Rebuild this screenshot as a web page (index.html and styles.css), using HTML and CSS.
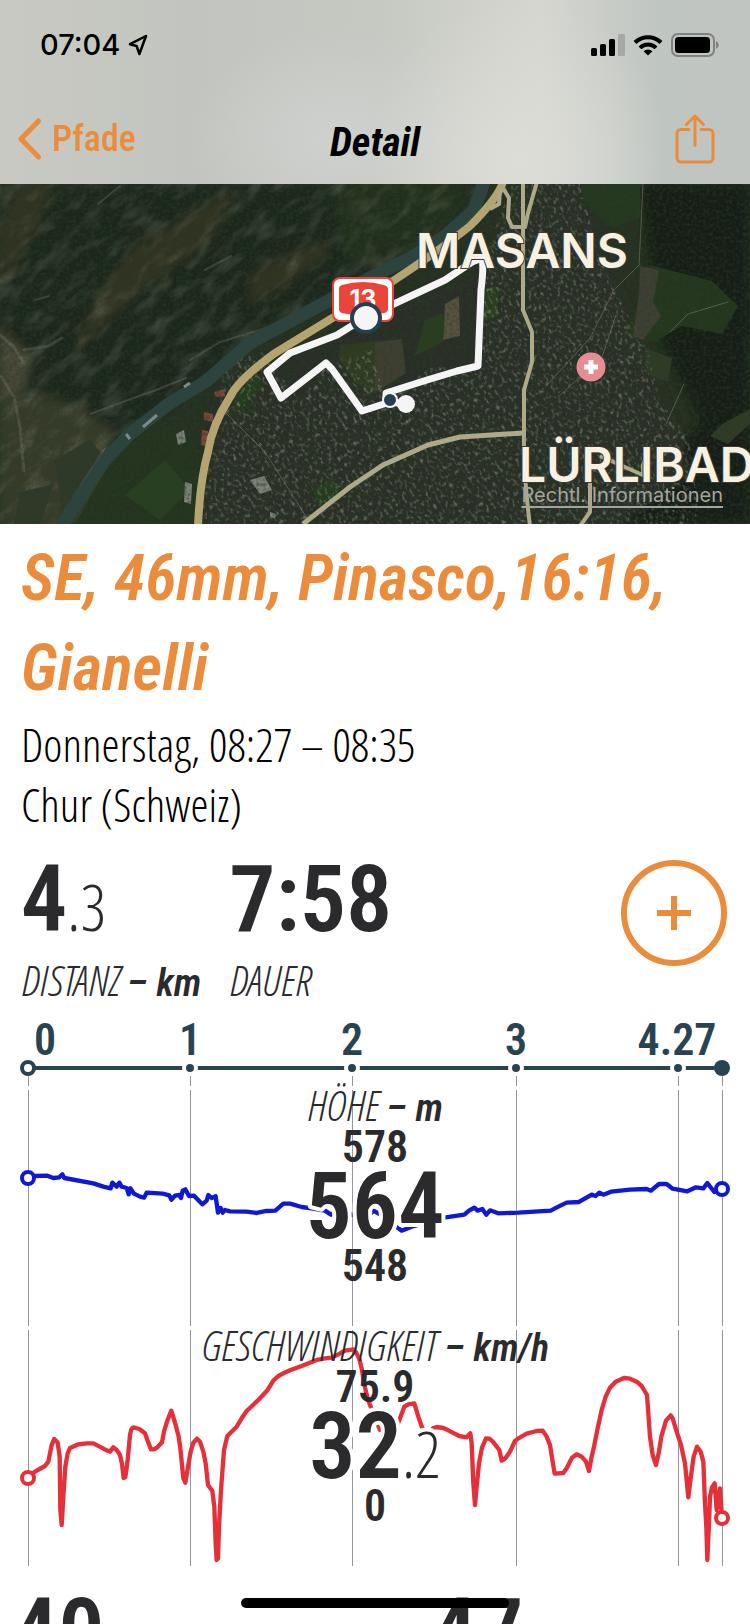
FILE: index.html
```
<!DOCTYPE html>
<html lang="de">
<head>
<meta charset="utf-8">
<meta name="viewport" content="width=device-width, initial-scale=1">
<title>Detail</title>
<link rel="stylesheet" href="styles.css">
</head>
<body>
<div class="screen">
  <header class="header">
    <div class="status">
      <div class="status-group">
        <span class="clock">07:04</span>
        <svg class="locate" viewBox="0 0 20 22" aria-hidden="true"><path d="M18 2 2 10.200 8.600 12 11.400 20Z"/></svg>
      </div>
      <div class="status-group">
        <svg class="signal" viewBox="0 0 34 22" aria-hidden="true"><rect x="0" y="14" width="6" height="8" rx="1.500"/><rect x="9" y="10" width="6" height="12" rx="1.500"/><rect x="18" y="5" width="6" height="17" rx="1.500"/><rect class="dim" x="27" y="0" width="7" height="22" rx="1.500"/></svg>
        <svg class="wifi" viewBox="0 0 30 22" aria-hidden="true"><path d="M2 8.500a18.500 18.500 0 0 1 26 0M7 13.800a11.300 11.300 0 0 1 16 0"/><path class="tip" d="M15 21.500 10.600 17.200a6.300 6.300 0 0 1 8.800 0Z"/></svg>
        <svg class="battery" viewBox="0 0 48 24" aria-hidden="true"><rect class="case" x="1" y="1" width="42" height="22" rx="6"/><rect x="4" y="4" width="35" height="16" rx="3.500"/><path class="cap" d="M45 8v8a4.300 4.300 0 0 0 0-8Z"/></svg>
      </div>
    </div>
    <nav class="nav">
      <a class="back" href="#pfade">
        <svg viewBox="0 0 25 44" aria-hidden="true"><path d="M21.500 4 4 22l17.500 18"/></svg>
        <span>Pfade</span>
      </a>
      <h1 class="heading">Detail</h1>
      <button class="share" type="button" aria-label="Teilen">
        <svg viewBox="0 0 40 50" aria-hidden="true"><path d="M14 15.500H6a4 4 0 0 0-4 4V44a4 4 0 0 0 4 4h28a4 4 0 0 0 4-4V19.500a4 4 0 0 0-4-4h-8M20 31.500V3M11.500 10.500 20 2l8.500 8.500"/></svg>
      </button>
    </nav>
  </header>

  <main class="content">
    <section class="map" aria-label="Karte">
      <svg viewBox="0 184 750 340" preserveAspectRatio="xMidYMid slice">
        <defs>
          <filter id="soft" x="-10%" y="-10%" width="120%" height="120%"><feGaussianBlur stdDeviation="5"/></filter>
          <filter id="rock" x="0" y="0" width="100%" height="100%">
            <feTurbulence type="fractalNoise" baseFrequency="0.035 0.080" numOctaves="6" seed="7"/>
            <feColorMatrix values="0 0 0 0 .38  0 0 0 0 .38  0 0 0 0 .28  2.600 0 0 0 -1.200"/>
          </filter>
          <filter id="grain" x="0" y="0" width="100%" height="100%">
            <feTurbulence type="fractalNoise" baseFrequency="0.300" numOctaves="3" seed="3"/>
            <feColorMatrix values="0 0 0 0 .02  0 0 0 0 .05  0 0 0 0 .02  0 2.500 0 0 -1"/>
          </filter>
          <filter id="houses" x="0" y="0" width="100%" height="100%">
            <feTurbulence type="fractalNoise" baseFrequency="0.320 0.220" numOctaves="3" seed="11"/>
            <feColorMatrix values="0 0 0 0 .55  0 0 0 0 .56  0 0 0 0 .51  0 3.600 0 0 -1.850"/>
          </filter>
          <clipPath id="hillside"><path d="M0 184H482L470 212 375 272 250 342 170 402 105 455 60 524H0Z"/></clipPath>
          <clipPath id="town"><path d="M225 362 262 352 300 400 330 360 372 350 385 398 430 368 476 365 484 260 510 184H580L600 260 625 310 648 350 660 400 690 440 700 524H200L214 430Z"/></clipPath>
        </defs>
        <rect y="184" width="750" height="340" fill="#263022"/>
        <g filter="url(#soft)">
          <path d="M0 184H482L375 272 250 342 105 455 60 524H0Z" fill="#1f271c"/>
          <path d="M20 184H55L25 250 0 285V225ZM130 250 215 200 235 184 215 235 130 300 75 350 90 310ZM250 275 320 240 330 255 250 305Z" fill="#323323"/>
          <path d="M0 395 60 400 115 430 90 524H0Z" fill="#393b2c"/>
          <path d="M0 330 30 355 25 390 0 400Z" fill="#4a4739"/>
          <path d="M640 184H750V524H590L650 490 700 420 660 340Z" fill="#151d13"/>
          <path d="M330 184H430L470 184 440 225 350 270Z" fill="#212d1e"/>
          <path d="M225 362 300 340 485 270 520 184H590L620 290 660 390 690 470 620 524H200Z" fill="#2b2f28"/>
        </g>
        <g clip-path="url(#hillside)"><rect x="-250" y="50" width="900" height="620" transform="rotate(-42 200 350)" filter="url(#rock)" opacity=".25"/></g>
        <path d="m650 265 62 16 26 25-16 28-40-8-28 16-30-6 14-30Z" fill="#25361e"/>
        <path d="m640 266 19 4-6 32 8 14-18 24-10-4 6-42Z" fill="#403f36"/>
        <path d="m645 348 27 10-4 24-22-8ZM722 424l30-16v14l-24 22-18-8Z" fill="#303b26"/>
        <path d="M580 184h60v34l-28 10-22-18Z" fill="#263720"/>
        <path d="m445 304 14-8 1 40-17 4Z" fill="#5a5240"/>
        <path d="m482 290 16-4v30l-17 6ZM425 320l20-8-2 30-28 14Z" fill="#2a3d1f"/>
        <path d="m340 345 35-4v52l-18-8-18-26Z" fill="#303b21"/>
        <path d="m375 342 27-3 4 34-31 20Z" fill="#413f32"/>
        <path d="M120 450 160 420 200 450 196 524H75L100 480Z" fill="#25331f"/>
        <path d="m125 495 40-35 25 30-30 30Z" fill="#2a3f21"/>
        <path d="m232 390 24-16 6 14-26 26Z" fill="#253b1e"/>
        <path d="m312 490 20-12 12 18-24 14Z" fill="#263c20"/>
        <path d="m55 460 35-20 10 12-38 60ZM20 492l34-8-14 40H14Z" fill="#30382a"/>
        <g clip-path="url(#town)"><rect x="100" y="50" width="700" height="600" transform="rotate(-32 450 350)" filter="url(#houses)" opacity=".4"/></g>
        <g fill="none" stroke="#77766a" stroke-linecap="round" stroke-linejoin="round">
          <path d="m0 335 14 12 10 16M24 350l24-4 14-8M0 375l14 22 6 30 4 44" stroke-width="3" opacity=".4"/>
          <path d="M98 204l22-18M205 270l26-14M35 300l14-4M190 360l30-18 50-15M150 392l-60 22M186 378l-40 16" stroke-width="2" opacity=".4"/>
          <path d="m105 448-24 37-23 39M225 412l40 40 42 66M638 266l-24 24-24 48-44 48M616 315l-14 42-44 40M728 302l-40 12-18 18M684 384l-18 40M643 184l-4 82" stroke-width="1" opacity=".7"/>
        </g>
        <path d="m204 412 9 2v8l-9-2ZM202 430l6 1v16l-7-2ZM214 392l10-3 1 7-9 1Z" fill="#81473a"/>
        <path d="m176 434 8-4 2 12-8 3ZM270 512l6 2-1 5-5-3ZM185 482l7 2-1 20-7-2ZM250 480l14-4 8 14-12 4Z" fill="#80827a"/>
        <rect y="184" width="750" height="340" filter="url(#grain)" opacity=".55"/>

        <path d="M484 182 474 210 445 236 410 258 375 275 330 300 250 343 205 382 170 403 130 434 105 460 84 492 60 528" fill="none" stroke="#2c433e" stroke-width="13" stroke-linejoin="round"/>
        <path d="m184 387 6-4M143 427l14-12M126 434l4 5" stroke="#7c8984" stroke-width="3"/>
        <path d="M503 182Q498 198 470 226 440 250 393 281L275 353Q238 380 230 397 212 425 208 452 200 480 198 526" fill="none" stroke="#b3a471" stroke-width="8"/>
        <g fill="none" stroke="#aea988" stroke-width="4" stroke-linejoin="round">
          <path d="M523 182V310L532 332V362L524 390V434Q523 470 530 526" />
          <path d="M503 188 509 198 508 218 512 227H525L528 213 537 182M500 190 499 204 490 209"/>
          <path d="M590 455V512L580 526M600 456 645 476Q640 465 646 460"/>
          <path d="M523 433 460 437 428 445 383 465 350 487 303 524" stroke-width="5"/>
        </g>
        <path d="M366 317 337 335 290 353 267 372 281 398 326 363 332 369 362 411 390 402 406 404M386 400V393L427 380 457 371 478 366 481 290Q484 266 482 258L472 262 445 280 366 317" fill="none" stroke="#f5f5f5" stroke-width="7" stroke-linejoin="round"/>
        <circle cx="406" cy="404" r="9" fill="#f5f5f5"/>
        <circle cx="390" cy="400" r="7" fill="#25414f" stroke="#f5f5f5" stroke-width="2"/>
        <rect x="333" y="278" width="60" height="43" rx="7" fill="#fff" stroke="#e9453a" stroke-width="2"/>
        <path d="M339 288Q339 286 342 285 363 279 384 285 388 286 388 289V309Q388 312 384 313 363 318 342 313 339 312 339 309Z" fill="#e9453a"/>
        <text class="shield" x="363" y="308">13</text>
        <circle cx="366" cy="318" r="14" fill="#f5f5f5" stroke="#25414f" stroke-width="4"/>
        <circle cx="591" cy="367" r="14.500" fill="#e78c92"/>
        <path d="M591 360v14M584 367h14" stroke="#fff" stroke-width="5"/>
        <text class="place" x="416" y="268">MASANS</text>
        <text class="place" x="519" y="482">LÜRLIBAD</text>
      </svg>
      <a class="legal" href="#rechtliches">Rechtl. Informationen</a>
    </section>

    <section class="intro">
      <h2 class="title">SE, 46mm, Pinasco,16:16, Gianelli</h2>
      <p class="meta">Donnerstag, 08:27 – 08:35</p>
      <p class="meta">Chur (Schweiz)</p>
    </section>

    <section class="summary">
      <div class="stat">
        <div class="value">4<span class="decimal">.3</span></div>
        <div class="label">DISTANZ <b>– km</b></div>
      </div>
      <div class="stat">
        <div class="value">7:58</div>
        <div class="label">DAUER</div>
      </div>
      <button class="add" type="button" aria-label="Hinzufügen">
        <svg viewBox="0 0 34 34" aria-hidden="true"><path d="M17 0v34M0 17h34"/></svg>
      </button>
    </section>

    <section class="charts">
      <svg class="axis" viewBox="0 1004 750 86">
        <path class="grid" d="M28.500 1076v10M190.500 1076v10M352.500 1076v10M516.500 1076v10M678.500 1076v10M722.500 1076v10"/>
        <path class="axis-line" d="M28 1068H722"/>
        <g class="stops"><circle cx="190" cy="1068" r="6"/><circle cx="352" cy="1068" r="6"/><circle cx="516" cy="1068" r="6"/><circle cx="678" cy="1068" r="6"/></g>
        <circle class="start" cx="28" cy="1068" r="6"/>
        <circle class="end" cx="722" cy="1068" r="8"/>
        <g class="axis-text"><text x="45" y="1055">0</text><text x="190" y="1055">1</text><text x="352" y="1055">2</text><text x="516" y="1055">3</text><text x="677" y="1055">4.27</text></g>
      </svg>

      <svg class="chart altitude" viewBox="0 0 750 236">
        <path class="grid" d="M28.500 0v236M190.500 0v236M352.500 0v236M516.500 0v236M678.500 0v236M722.500 0v236"/>
        <g transform="translate(0 -10) scale(.33333)">
          <polyline class="curve" points="85,293 105,288 142,287 160,294 178,292 187,283 193,294 280,310 310,320 332,325 337,308 350,320 358,308 365,320 380,324 386,343 391,325 402,341 420,350 432,353 440,338 488,341 508,346 514,359 525,347 538,345 543,354 548,332 556,328 567,348 582,347 607,373 620,362 625,345 635,354 647,349 654,398 662,384 668,398 675,390 690,394 740,395 770,399 800,393 826,392 850,371 870,371 905,381 940,386 975,392 993,404 1005,395 1060,405 1110,404 1120,392 1150,408 1195,445 1205,452 1235,440 1337,412 1393,404 1407,392 1423,383 1433,392 1447,387 1459,404 1470,391 1495,400 1555,398 1652,392 1675,380 1700,368 1737,366 1775,344 1787,348 1798,338 1810,344 1833,335 1890,329 1940,327 1953,332 1977,312 2000,312 2018,326 2062,334 2088,322 2110,325 2122,309 2143,336 2166,327"/>
        </g>
        <circle class="point" cx="28" cy="88" r="6"/><circle class="point" cx="722" cy="99" r="6"/>
        <text class="chart-label" x="375" y="31">HÖHE <tspan class="unit">– m</tspan></text>
        <text class="bound" x="375" y="72">578</text>
        <text class="reading" x="375" y="148">564</text>
        <text class="bound" x="375" y="191">548</text>
      </svg>

      <svg class="chart speed" viewBox="0 0 750 236">
        <path class="grid" d="M28.500 0v236M190.500 0v236M352.500 0v236M516.500 0v236M678.500 0v236M722.500 0v236"/>
        <g transform="translate(0 -20) scale(.33333)">
          <polyline class="curve" points="84,505 105,485 135,468 145,455 155,405 163,387 173,398 179,440 181,600 185,645 190,560 196,470 203,430 210,414 235,403 260,400 280,400 305,413 320,421 330,425 340,412 350,420 360,435 366,462 371,504 376,502 383,450 390,375 394,358 400,352 418,357 435,370 445,398 453,418 462,418 472,412 486,397 492,365 501,335 514,302 527,345 536,380 541,415 550,505 556,518 565,465 572,425 580,398 591,386 600,395 610,425 617,460 624,525 637,543 643,590 647,700 650,750 654,745 657,650 663,540 672,420 682,378 710,350 725,325 740,303 775,270 803,240 820,212 835,198 850,190 870,181 905,168 950,150 975,145 995,143 1015,133 1035,122 1060,118 1068,127 1078,147 1086,180 1092,220 1102,262 1112,290 1140,360 1190,350 1200,325 1213,290 1225,283 1243,280 1255,320 1268,357 1290,365 1300,354 1310,351 1330,354 1345,361 1378,378 1400,382 1411,370 1415,400 1420,520 1425,585 1430,530 1437,460 1446,413 1458,385 1468,386 1478,394 1498,420 1505,452 1515,446 1530,425 1545,393 1555,385 1580,371 1610,363 1628,362 1640,380 1650,405 1658,455 1664,491 1690,489 1700,475 1716,443 1730,433 1745,440 1758,455 1767,483 1775,440 1782,410 1793,355 1805,300 1817,260 1830,233 1847,215 1872,204 1890,206 1910,215 1925,228 1941,255 1945,310 1950,380 1958,435 1968,465 1976,430 1984,380 1998,332 2012,316 2018,325 2027,355 2043,405 2055,460 2065,562 2072,505 2081,440 2091,410 2102,425 2110,455 2115,580 2119,650 2122,750 2127,640 2130,560 2136,532 2144,520 2150,600 2160,535 2166,624"/>
        </g>
        <circle class="point" cx="28" cy="148" r="6"/><circle class="point" cx="722" cy="188" r="6"/>
        <text class="chart-label" x="375" y="31">GESCHWINDIGKEIT <tspan class="unit">– km/h</tspan></text>
        <text class="bound" x="375" y="72">75.9</text>
        <text class="reading" x="375" y="148">32<tspan class="fraction">.2</tspan></text>
        <text class="bound" x="375" y="191">0</text>
      </svg>
    </section>

    <section class="totals">
      <div class="value">40</div>
      <div class="value">47</div>
    </section>
  </main>
  <div class="home-indicator"></div>
</div>
</body>
</html>
```
FILE: styles.css
```
:root {
  --orange: #ea8c3b;
  --ink: #2b2b2d;
  --slate: #2a4350;
  --condensed: "Avenir Next Condensed", "Roboto Condensed", "Open Sans Condensed", sans-serif;
  --condensed-light: "Avenir Next Condensed", "Open Sans Condensed Light", "Roboto Condensed", sans-serif;
  --system: Inter, "Liberation Sans", sans-serif;
}

* { box-sizing: border-box; }

body {
  margin: 0;
  background: #fff;
  color: var(--ink);
  font-family: var(--condensed);
}

h1, h2, p { margin: 0; }

button {
  padding: 0;
  border: 0;
  background: none;
  color: var(--orange);
}

svg { display: block; }

.screen {
  display: flex;
  flex-direction: column;
  height: 100vh;
  overflow: hidden;
}

.header {
  flex: none;
  background:
    radial-gradient(ellipse 20% 90% at 69% 88%, #dcddd7, transparent),
    radial-gradient(ellipse 20% 60% at 45% 75%, #ced1ce, transparent),
    linear-gradient(90deg, #c9c9c3 0%, #c2c5bf 25%, #c6c8c2 50%, #d5d6d0 72%, #bfc5c1 88%, #c0c5c1 100%);
}

.status {
  display: flex;
  justify-content: space-between;
  align-items: center;
  height: 88px;
  padding: 2px 31px 0 40px;
}

.status-group {
  display: flex;
  align-items: center;
  gap: 8px;
}

.clock {
  color: #000;
  font: 500 29px/36px var(--system);
}

.locate { width: 20px; height: 22px; fill: none; stroke: #000; stroke-width: 2.5; stroke-linejoin: round; }
.signal { width: 34px; height: 22px; }
.signal .dim { fill: #a6a8a5; }
.wifi { width: 30px; height: 22px; fill: none; stroke: #000; stroke-width: 4; }
.wifi .tip { fill: #000; stroke: none; }
.battery { width: 48px; height: 24px; }
.battery .case { fill: none; stroke: #80827f; stroke-width: 2; }
.battery .cap { fill: #80827f; }

.nav {
  display: grid;
  grid-template-columns: 1fr auto 1fr;
  align-items: center;
  height: 96px;
  padding: 6px 17px 0;
}

.back {
  display: flex;
  align-items: center;
  gap: 10px;
  color: var(--orange);
  font-size: 36px;
  font-weight: 500;
  line-height: 48px;
  text-decoration: none;
}

.back svg { width: 25px; height: 44px; fill: none; stroke: currentColor; stroke-width: 5; stroke-linecap: round; stroke-linejoin: round; }

.heading {
  color: #000;
  font-size: 40px;
  font-style: italic;
  font-weight: 700;
  line-height: 48px;
  padding-top: 8px;
}

.share { justify-self: end; margin-right: 18px; }
.share svg { width: 40px; height: 50px; fill: none; stroke: currentColor; stroke-width: 3; stroke-linecap: round; stroke-linejoin: round; }

.content {
  flex: 1;
  min-height: 0;
  overflow: auto;
  scrollbar-width: none;
}

.map { position: relative; overflow: hidden; }
.map svg { width: 100%; height: auto; }

.place {
  fill: #f7f1e2;
  stroke: #3b3a35;
  stroke-width: 2px;
  paint-order: stroke;
  font: 600 48px var(--system);
}

.shield { fill: #fff; font: 700 25px var(--system); text-anchor: middle; }

.legal {
  position: absolute;
  right: 27px;
  bottom: 17px;
  color: #a3a59f;
  font: 400 20px/24px var(--system);
  text-underline-offset: 4px;
}

.intro { padding: 10px 21px 0; }

.title {
  color: var(--orange);
  font-size: 64px;
  font-style: italic;
  font-weight: 600;
  line-height: 90px;
}

.meta {
  color: #000;
  font-family: var(--condensed-light);
  font-size: 46px;
  font-weight: 300;
  line-height: 60px;
}

.summary {
  display: flex;
  gap: 28px;
  padding: 18px 23px 0 21px;
}

.value {
  font-size: 92px;
  font-weight: 600;
  line-height: 96px;
}

.decimal {
  font-family: var(--condensed-light);
  font-size: 64px;
  font-weight: 300;
  line-height: 64px;
}

.label {
  margin-top: 8px;
  font-family: var(--condensed-light);
  font-size: 42px;
  font-style: italic;
  font-weight: 300;
  line-height: 48px;
}

.label b {
  font-family: var(--condensed);
  font-size: 38px;
  font-weight: 600;
  line-height: 38px;
}

.add {
  display: grid;
  place-items: center;
  width: 106px;
  height: 106px;
  margin: 8px 0 0 auto;
  border: 6px solid var(--orange);
  border-radius: 50%;
}

.add svg { width: 34px; height: 34px; stroke: currentColor; stroke-width: 6; }

.charts {
  display: grid;
  row-gap: 4px;
}

.charts svg { width: 100%; height: auto; overflow: visible; font-family: var(--condensed); }
.axis { margin-bottom: -4px; }

.grid { fill: none; stroke: #9497a1; stroke-width: 1; }
.axis-line { stroke: var(--slate); stroke-width: 4; }
.stops { fill: var(--slate); stroke: #fff; stroke-width: 4; }
.start { fill: #fff; stroke: var(--slate); stroke-width: 4; }
.end { fill: var(--slate); }
.axis-text { fill: var(--slate); font-size: 44px; font-weight: 600; text-anchor: middle; }

.altitude { --line: #0f18d2; }
.speed { --line: #e5303a; }

.curve { fill: none; stroke: var(--line); stroke-width: 13; stroke-linecap: round; stroke-linejoin: round; }
.point { fill: #fff; stroke: var(--line); stroke-width: 4; }

.chart text { fill: var(--ink); text-anchor: middle; }
.chart-label { font-family: var(--condensed-light); font-size: 42px; font-style: italic; font-weight: 300; }
.unit { font-family: var(--condensed); font-size: 38px; font-weight: 600; }
.bound { font-size: 44px; font-weight: 600; }
.reading { font-size: 92px; font-weight: 600; stroke: #fff; stroke-width: 8px; stroke-linejoin: round; paint-order: stroke; }
.fraction { font-family: var(--condensed-light); font-size: 64px; font-weight: 300; }

.totals {
  display: grid;
  grid-template-columns: 1fr 1fr;
  column-gap: 112px;
  padding: 19px 12px;
}

.home-indicator {
  position: fixed;
  bottom: 16px;
  left: 50%;
  width: 268px;
  height: 10px;
  margin-left: -134px;
  border-radius: 5px;
  background: #000;
}
```
